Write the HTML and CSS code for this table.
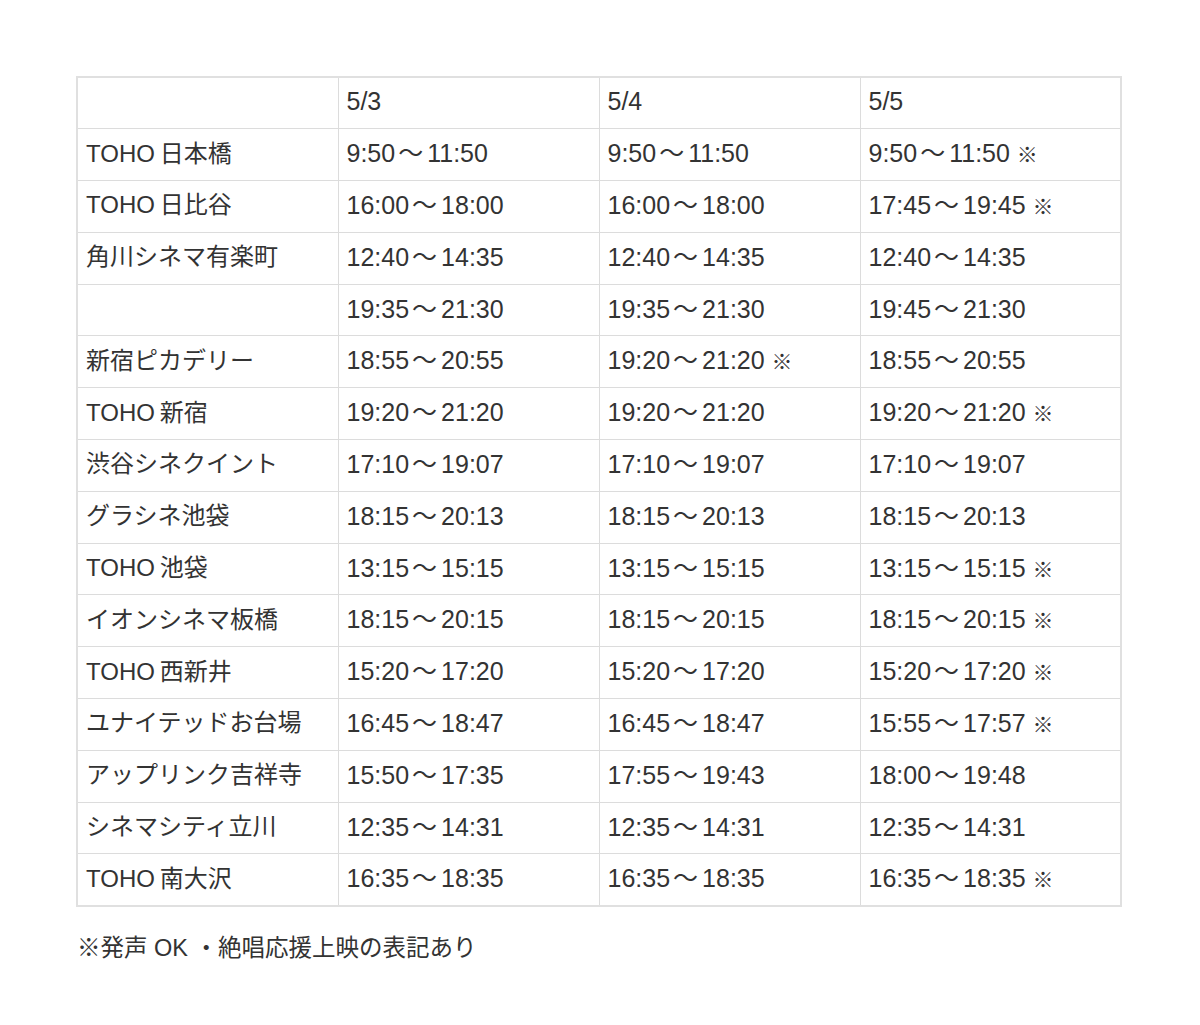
FILE: index.html
```html
<!DOCTYPE html>
<html lang="ja">
<head>
<meta charset="utf-8">
<link rel="stylesheet" href="styles.css">
</head>
<body>
<div class="page">
<table class="schedule">
<colgroup><col><col><col><col></colgroup>
<tr><td></td><td>5/3</td><td>5/4</td><td>5/5</td></tr>
<tr><td>TOHO&#8201;日本橋</td><td>9:50<span class="t">～</span>11:50</td><td>9:50<span class="t">～</span>11:50</td><td>9:50<span class="t">～</span>11:50 <span class="m">※</span></td></tr>
<tr><td>TOHO&#8201;日比谷</td><td>16:00<span class="t">～</span>18:00</td><td>16:00<span class="t">～</span>18:00</td><td>17:45<span class="t">～</span>19:45 <span class="m">※</span></td></tr>
<tr><td>角川シネマ有楽町</td><td>12:40<span class="t">～</span>14:35</td><td>12:40<span class="t">～</span>14:35</td><td>12:40<span class="t">～</span>14:35</td></tr>
<tr><td></td><td>19:35<span class="t">～</span>21:30</td><td>19:35<span class="t">～</span>21:30</td><td>19:45<span class="t">～</span>21:30</td></tr>
<tr><td>新宿ピカデリー</td><td>18:55<span class="t">～</span>20:55</td><td>19:20<span class="t">～</span>21:20 <span class="m">※</span></td><td>18:55<span class="t">～</span>20:55</td></tr>
<tr><td>TOHO&#8201;新宿</td><td>19:20<span class="t">～</span>21:20</td><td>19:20<span class="t">～</span>21:20</td><td>19:20<span class="t">～</span>21:20 <span class="m">※</span></td></tr>
<tr><td>渋谷シネクイント</td><td>17:10<span class="t">～</span>19:07</td><td>17:10<span class="t">～</span>19:07</td><td>17:10<span class="t">～</span>19:07</td></tr>
<tr><td>グラシネ池袋</td><td>18:15<span class="t">～</span>20:13</td><td>18:15<span class="t">～</span>20:13</td><td>18:15<span class="t">～</span>20:13</td></tr>
<tr><td>TOHO&#8201;池袋</td><td>13:15<span class="t">～</span>15:15</td><td>13:15<span class="t">～</span>15:15</td><td>13:15<span class="t">～</span>15:15 <span class="m">※</span></td></tr>
<tr><td>イオンシネマ板橋</td><td>18:15<span class="t">～</span>20:15</td><td>18:15<span class="t">～</span>20:15</td><td>18:15<span class="t">～</span>20:15 <span class="m">※</span></td></tr>
<tr><td>TOHO&#8201;西新井</td><td>15:20<span class="t">～</span>17:20</td><td>15:20<span class="t">～</span>17:20</td><td>15:20<span class="t">～</span>17:20 <span class="m">※</span></td></tr>
<tr><td>ユナイテッドお台場</td><td>16:45<span class="t">～</span>18:47</td><td>16:45<span class="t">～</span>18:47</td><td>15:55<span class="t">～</span>17:57 <span class="m">※</span></td></tr>
<tr><td>アップリンク吉祥寺</td><td>15:50<span class="t">～</span>17:35</td><td>17:55<span class="t">～</span>19:43</td><td>18:00<span class="t">～</span>19:48</td></tr>
<tr><td>シネマシティ立川</td><td>12:35<span class="t">～</span>14:31</td><td>12:35<span class="t">～</span>14:31</td><td>12:35<span class="t">～</span>14:31</td></tr>
<tr><td>TOHO&#8201;南大沢</td><td>16:35<span class="t">～</span>18:35</td><td>16:35<span class="t">～</span>18:35</td><td>16:35<span class="t">～</span>18:35 <span class="m">※</span></td></tr>
</table>
<p class="note">※発声 OK ・絶唱応援上映の表記あり</p>
</div>
</body>
</html>
```
FILE: styles.css
```css
html, body {
  margin: 0;
  padding: 0;
  background: #ffffff;
}
body {
  font-family: "Liberation Sans", "Noto Sans CJK JP", sans-serif;
  color: #333333;
}
.page {
  padding: 76px 77px 0 76px;
}
.schedule {
  width: 1046px;
  border-collapse: collapse;
  table-layout: fixed;
  border: 2px solid #e0e0e0;
}
.schedule td {
  height: 51.8px;
  padding: 0 8px 4px 8px;
  border: 1px solid #dcdcdc;
  font-size: 25px;
  line-height: 1;
  vertical-align: middle;
  white-space: nowrap;
  box-sizing: border-box;
}
.schedule td:first-child {
  font-size: 24px;
  padding-bottom: 2px;
}
.t {
  font-family: "Noto Sans CJK JP", sans-serif;
  margin: 0 4px 0 3px;
}
.m {
  font-family: "Noto Sans CJK JP", sans-serif;
  font-size: 21px;
  font-weight: 500;
}
.note {
  margin: 22px 0 0 1px;
  font-size: 23.5px;
  color: #333333;
}
```
